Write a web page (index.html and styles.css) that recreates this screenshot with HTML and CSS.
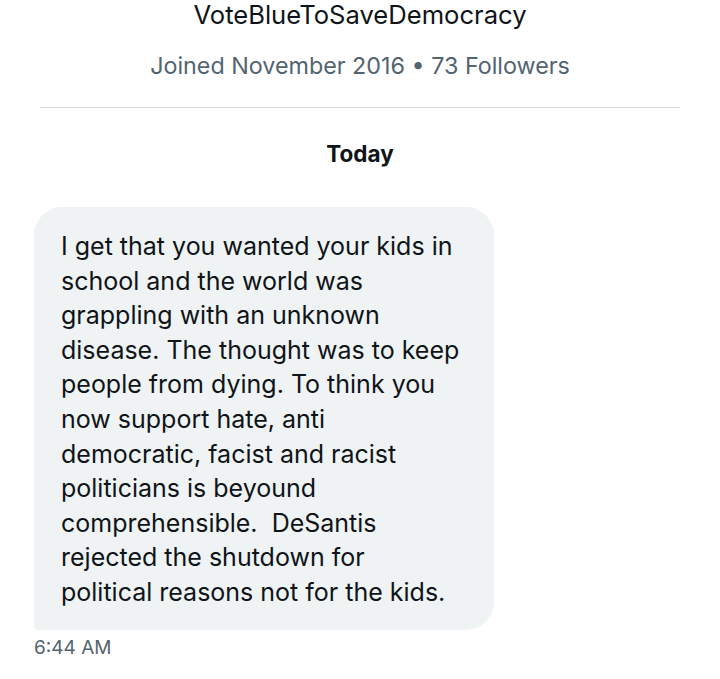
FILE: index.html
```html
<!DOCTYPE html>
<html lang="en">

<head>
    <meta charset="UTF-8">
    <meta name="viewport" content="width=device-width, initial-scale=1.0">
    <title>Messages</title>
    <link rel="stylesheet" href="styles.css">
</head>

<body>
    <!-- cabeçalho do perfil -->
    <div class="perfil">
        <div class="nome">VoteBlueToSaveDemocracy</div>
        <div class="info">Joined November 2016 • 73 Followers</div>
    </div>

    <div class="dia">Today</div>

    <!-- mensagem recebida -->
    <div class="conversa">
        <div class="balao">
            I get that you wanted your kids in<br>
            school and the world was<br>
            grappling with an unknown<br>
            disease. The thought was to keep<br>
            people from dying. To think you<br>
            now support hate, anti<br>
            democratic, facist and racist<br>
            politicians is beyound<br>
            comprehensible.&nbsp; DeSantis<br>
            rejected the shutdown for<br>
            political reasons not for the kids.
        </div>
        <div class="hora">6:44 AM</div>
    </div>
</body>

</html>
```

FILE: styles.css
```css
body {
    margin: 0;
    font-family: Inter, "Noto Sans", sans-serif;
    background-color: #ffffff;
    color: #0f1419;
}

.perfil {
    margin: 0 40px;
    padding-bottom: 26px;
    border-bottom: 1px solid #cfd9de;
    text-align: center;
}

.nome {
    font-size: 25.6px;
    line-height: 30px;
    margin-top: 0;
}

.info {
    font-size: 23.3px;
    line-height: 30px;
    margin-top: 21px;
    color: #536471;
}

.dia {
    text-align: center;
    font-weight: bold;
    font-size: 22.5px;
    line-height: 28px;
    margin-top: 32px;
}

.conversa {
    padding-left: 34px;
    margin-top: 39px;
}

.balao {
    width: 406px;
    padding: 22px 27px 20px 27px;
    background-color: #eff3f4;
    border-radius: 28px 28px 28px 4px;
    font-size: 25px;
    line-height: 34.6px;
    white-space: nowrap;
}

.hora {
    font-size: 19px;
    line-height: 24px;
    margin-top: 6px;
    color: #536471;
}
```
